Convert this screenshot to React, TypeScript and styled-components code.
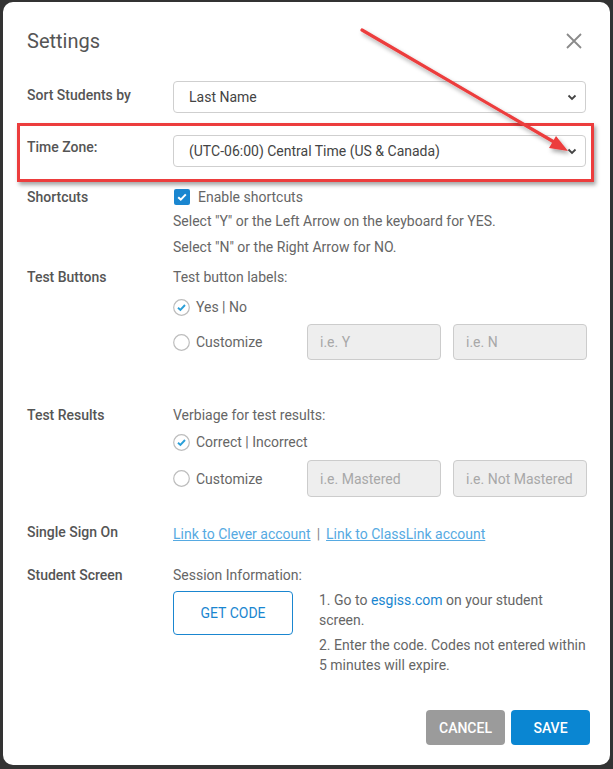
import React from "react";
import styled, { createGlobalStyle } from "styled-components";

const GlobalStyle = createGlobalStyle`
  html, body {
    margin: 0;
    padding: 0;
    background: #333333;
  }
  body {
    font-family: Roboto, "Liberation Sans", Arial, sans-serif;
    font-size: 14px;
    color: #666;
  }
  * {
    box-sizing: border-box;
  }
`;

const Modal = styled.div`
  position: relative;
  width: 607px;
  height: 763px;
  margin: 2px 3px 4px;
  padding: 24px 24px 20px;
  background: #fff;
  border-radius: 10px;
  display: flex;
  flex-direction: column;
`;

const Header = styled.div`
  display: flex;
  align-items: center;
  justify-content: space-between;
  height: 30px;
`;

const Title = styled.h2`
  margin: 0;
  font-size: 20px;
  font-weight: 400;
  line-height: 30px;
  color: #555;
`;

const CloseButton = styled.button`
  border: none;
  background: none;
  padding: 0;
  margin-right: 2px;
  width: 20px;
  height: 20px;
  display: flex;
  align-items: center;
  justify-content: center;
  cursor: pointer;
`;

const Row = styled.div<{ $mt: number }>`
  position: relative;
  display: grid;
  grid-template-columns: 146px 413px;
  align-items: start;
  margin-top: ${(p) => p.$mt}px;
`;

const Label = styled.div<{ $pt?: number }>`
  padding-top: ${(p) => p.$pt ?? 0}px;
  line-height: 20px;
  font-weight: 500;
  color: #555;
`;

const Field = styled.div`
  display: flex;
  flex-direction: column;
`;

const SelectBox = styled.div`
  height: 32px;
  border: 1px solid #cfcfcf;
  border-radius: 4px;
  display: flex;
  align-items: center;
  justify-content: space-between;
  padding: 0 8px 0 15px;
  color: #444;
  font-size: 14px;
`;

const Annotation = styled.div`
  position: absolute;
  left: -10px;
  top: -12px;
  width: 577px;
  height: 59px;
  border: 3px solid #ec3d3d;
  box-shadow: 2px 3px 4px rgba(0, 0, 0, 0.35);
  pointer-events: none;
`;

const Line = styled.div<{ $mt?: number }>`
  margin-top: ${(p) => p.$mt ?? 0}px;
  line-height: 20px;
  display: flex;
  align-items: center;
  white-space: nowrap;
`;

const CheckBox = styled.span`
  width: 16px;
  height: 16px;
  margin-left: 1px;
  margin-right: 8px;
  border-radius: 2px;
  background: #1a86d0;
  display: flex;
  align-items: center;
  justify-content: center;
`;

const RadioMark = styled.span`
  width: 17px;
  height: 17px;
  margin-right: 6px;
  display: flex;
`;

const OptionRow = styled.div<{ $mt: number }>`
  margin-top: ${(p) => p.$mt}px;
  display: flex;
  align-items: center;
`;

const OptionLabel = styled.div`
  width: 134px;
  flex-shrink: 0;
  display: flex;
  align-items: center;
  line-height: 20px;
  white-space: nowrap;
`;

const TextInput = styled.div<{ $h: number }>`
  width: 134px;
  flex-shrink: 0;
  height: ${(p) => p.$h}px;
  border: 1px solid #cccccc;
  border-radius: 4px;
  background: #eeeeee;
  color: #a8a8a8;
  padding-left: 12px;
  display: flex;
  align-items: center;
  white-space: nowrap;

  & + & {
    margin-left: 12px;
  }
`;

const LinkLine = styled.div`
  padding-top: 2px;
  line-height: 20px;
  color: #56aae2;
`;

const Link = styled.a`
  color: #56aae2;
  text-decoration: underline;
`;

const Sep = styled.span`
  margin: 0 6px;
  color: #888;
`;

const SessionBody = styled.div`
  margin-top: 6px;
  display: flex;
  align-items: flex-start;
`;

const OutlineButton = styled.button`
  width: 120px;
  height: 44px;
  flex-shrink: 0;
  border: 1px solid #1a86d0;
  border-radius: 4px;
  background: #fff;
  color: #1a86d0;
  font-family: inherit;
  font-size: 14px;
  margin-right: 26px;
`;

const Steps = styled.div`
  margin-top: -1px;
  line-height: 20px;
  white-space: nowrap;
`;

const Step = styled.p<{ $mt?: number }>`
  margin: ${(p) => p.$mt ?? 0}px 0 0;
`;

const Accent = styled.span`
  color: #1a86d0;
`;

const Footer = styled.div`
  margin-top: auto;
  display: flex;
  justify-content: flex-end;
  gap: 6px;
  margin-right: -4px;
`;

const FooterButton = styled.button<{ $primary?: boolean }>`
  width: 79px;
  height: 35px;
  border: none;
  border-radius: 4px;
  background: ${(p) => (p.$primary ? "#0a86d2" : "#9b9b9b")};
  color: #fff;
  font-family: inherit;
  font-size: 14px;
  font-weight: 500;
  text-transform: uppercase;
`;

const Arrow = styled.svg`
  position: absolute;
  left: 0;
  top: 0;
  width: 607px;
  height: 200px;
  pointer-events: none;
  overflow: visible;
`;

const Chevron = () => (
  <svg width="10" height="7" viewBox="0 0 10 7">
    <path d="M1.5 1.5 L5 5 L8.5 1.5" fill="none" stroke="#444" strokeWidth="1.8" />
  </svg>
);

const CheckedRadio = () => (
  <RadioMark>
    <svg width="17" height="17" viewBox="0 0 17 17">
      <circle cx="8.5" cy="8.5" r="7.8" fill="#fff" stroke="#bdbdbd" strokeWidth="1.2" />
      <path d="M5 8.8 L7.4 11 L12 6" fill="none" stroke="#2a9fd8" strokeWidth="1.9" />
    </svg>
  </RadioMark>
);

const EmptyRadio = () => (
  <RadioMark>
    <svg width="17" height="17" viewBox="0 0 17 17">
      <circle cx="8.5" cy="8.5" r="7.8" fill="#fff" stroke="#bdbdbd" strokeWidth="1.2" />
    </svg>
  </RadioMark>
);

export default function App() {
  return (
    <>
      <GlobalStyle />
      <Modal>
        <Header>
          <Title>Settings</Title>
          <CloseButton>
            <svg width="16" height="16" viewBox="0 0 16 16">
              <path d="M1 1 L15 15 M15 1 L1 15" stroke="#8a8a8a" strokeWidth="1.8" />
            </svg>
          </CloseButton>
        </Header>

        <Row $mt={25}>
          <Label $pt={4}>Sort Students by</Label>
          <SelectBox>
            Last Name
            <Chevron />
          </SelectBox>
        </Row>

        <Row $mt={22}>
          <Label $pt={2}>Time Zone:</Label>
          <SelectBox>
            (UTC-06:00) Central Time (US &amp; Canada)
            <Chevron />
          </SelectBox>
          <Annotation />
        </Row>

        <Row $mt={20}>
          <Label>Shortcuts</Label>
          <Field>
            <Line>
              <CheckBox>
                <svg width="12" height="12" viewBox="0 0 12 12">
                  <path d="M2.2 6.2 L4.8 8.6 L9.8 3.4" fill="none" stroke="#fff" strokeWidth="2" />
                </svg>
              </CheckBox>
              Enable shortcuts
            </Line>
            <Line $mt={4}>Select "Y" or the Left Arrow on the keyboard for YES.</Line>
            <Line $mt={6}>Select "N" or the Right Arrow for NO.</Line>
          </Field>
        </Row>

        <Row $mt={10}>
          <Label>Test Buttons</Label>
          <Field>
            <Line>Test button labels:</Line>
            <OptionRow $mt={10}>
              <OptionLabel>
                <CheckedRadio />
                Yes | No
              </OptionLabel>
            </OptionRow>
            <OptionRow $mt={7}>
              <OptionLabel>
                <EmptyRadio />
                Customize
              </OptionLabel>
              <TextInput $h={36}>i.e. Y</TextInput>
              <TextInput $h={36}>i.e. N</TextInput>
            </OptionRow>
          </Field>
        </Row>

        <Row $mt={45}>
          <Label>Test Results</Label>
          <Field>
            <Line>Verbiage for test results:</Line>
            <OptionRow $mt={7}>
              <OptionLabel>
                <CheckedRadio />
                Correct | Incorrect
              </OptionLabel>
            </OptionRow>
            <OptionRow $mt={8}>
              <OptionLabel>
                <EmptyRadio />
                Customize
              </OptionLabel>
              <TextInput $h={37}>i.e. Mastered</TextInput>
              <TextInput $h={37}>i.e. Not Mastered</TextInput>
            </OptionRow>
          </Field>
        </Row>

        <Row $mt={25}>
          <Label>Single Sign On</Label>
          <LinkLine>
            <Link href="#">Link to Clever account</Link>
            <Sep>|</Sep>
            <Link href="#">Link to ClassLink account</Link>
          </LinkLine>
        </Row>

        <Row $mt={21}>
          <Label>Student Screen</Label>
          <Field>
            <Line>Session Information:</Line>
            <SessionBody>
              <OutlineButton>GET CODE</OutlineButton>
              <Steps>
                <Step>
                  1. Go to <Accent>esgiss.com</Accent> on your student
                  <br />
                  screen.
                </Step>
                <Step $mt={5}>
                  2. Enter the code. Codes not entered within
                  <br />
                  5 minutes will expire.
                </Step>
              </Steps>
            </SessionBody>
          </Field>
        </Row>

        <Footer>
          <FooterButton>Cancel</FooterButton>
          <FooterButton $primary>Save</FooterButton>
        </Footer>

        <Arrow viewBox="0 0 607 200">
          <defs>
            <filter id="arrowShadow" x="-10%" y="-10%" width="130%" height="130%">
              <feDropShadow dx="2" dy="3" stdDeviation="2" floodColor="#000" floodOpacity="0.35" />
            </filter>
          </defs>
          <g filter="url(#arrowShadow)">
            <line x1="359" y1="28" x2="551" y2="140" stroke="#ec3d3d" strokeWidth="3.2" strokeLinecap="round" />
            <polygon points="565,149 546,146 553,134" fill="#ec3d3d" />
          </g>
        </Arrow>
      </Modal>
    </>
  );
}
